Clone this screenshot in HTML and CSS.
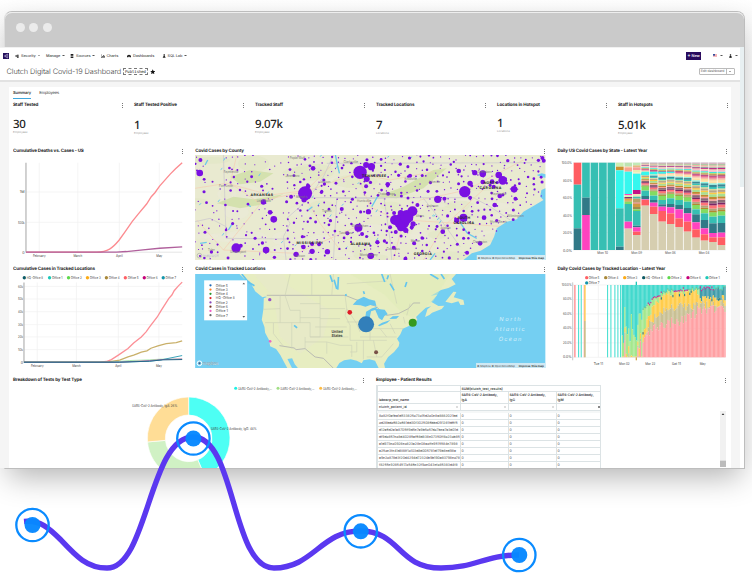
FILE: index.html
```html
<!DOCTYPE html>
<html lang="en">
<head>
<meta charset="utf-8">
<title>Clutch Digital Covid-19 Dashboard</title>
<link rel="stylesheet" href="styles.css">
</head>
<body>
<div class="window">
  <div class="titlebar"><i></i><i></i><i></i></div>
  <div class="screen">
    <header>
      <nav>
        <svg class="logo" viewBox="0 0 18 18"><rect width="18" height="18" fill="#24105c"/><path d="M14 3L9 6 4 9l5 3 5 3M9 6v6M14 3v12" fill="none" stroke="#d9d2ee" stroke-width="1.600"/></svg>
        <a class="n1"><svg viewBox="0 0 12 12"><path d="M0 6l5-4v8zM6 2h5v3H6zM6 7h5v4H6z"/></svg>Security<b></b></a>
        <a class="n2">Manage<b></b></a>
        <a class="n3"><svg viewBox="0 0 12 12"><path d="M2 0h8v3H2zM2 4h8v3H2zM2 8h8v4H2z"/></svg>Sources<b></b></a>
        <a class="n4"><svg viewBox="0 0 12 12"><path d="M0 1h1v9h11v1H0zM3 6h2v3H3zM6 3h2v6H6zM9 5h2v4H9z"/></svg>Charts</a>
        <a class="n5"><svg viewBox="0 0 12 12"><path d="M0 10V7a6 5 0 0 1 12 0v3H8L6 7l-2 3z"/></svg>Dashboards</a>
        <a class="n6"><svg viewBox="0 0 12 12"><path d="M5 0h3v5l3 6H2l3-6z"/></svg>SQL Lab<b></b></a>
        <span class="new"><em>+</em> New</span>
        <svg class="flag" viewBox="0 0 12 9"><rect width="12" height="9" fill="#fff"/><path d="M0 1h12M0 4h12M0 7h12" stroke="#e34b57" stroke-width="1.4"/><rect width="6" height="5" fill="#344f9d"/></svg><b class="caret"></b>
        <svg class="user" viewBox="0 0 10 12"><circle cx="5" cy="3" r="2.5"/><path d="M1 12V8q4-4 8 0v4z"/></svg><b class="caret last"></b>
      </nav>
      <div class="heading">
        <h1>Clutch Digital Covid-19 Dashboard</h1>
        <span class="published">Published</span>
        <svg class="star" viewBox="0 0 20 20"><path d="M10 1l2.8 6 6.5.8-4.8 4.4 1.3 6.6L10 15.600l-5.800 3.200 1.300-6.600L.7 7.800 7.200 7z"/></svg>
        <span class="edit"><u>Edit dashboard</u><s><b></b></s></span>
      </div>
    </header>
    <main>
      <div class="tabs"><span class="active">Summary</span><span>Employees</span></div>
      <section class="kpis">
        <article><h2>Staff Tested</h2><strong>30</strong><small>Employees</small></article>
        <article class="low"><h2>Staff Tested Positive</h2><strong>1</strong><small>Employees</small></article>
        <article><h2>Tracked Staff</h2><strong>9.07k</strong><small>Employees</small></article>
        <article class="low"><h2>Tracked Locations</h2><strong>7</strong><small>Locations</small></article>
        <article class="high"><h2>Locations in Hotspot</h2><strong>1</strong><small>Locations</small></article>
        <article class="low"><h2>Staff in Hotspots</h2><strong>5.01k</strong><small>Employees</small></article>
      </section>
      <section class="row first">
        <article><h2>Cumulative Deaths vs. Cases - US</h2><svg id="deaths" viewBox="39 45 513 315"></svg></article>
        <article><h2>Covid Cases by County</h2><svg id="county" viewBox="15 45 1051 315"></svg></article>
        <article><h2>Daily US Covid Cases by State - Latest Year</h2><svg id="states" viewBox="24 45 513 315"></svg></article>
      </section>
      <section class="row second">
        <article><h2>Cumulative Cases in Tracked Locations</h2><svg id="tracked" viewBox="39 41 513 283"></svg></article>
        <article><h2>Covid Cases in Tracked Locations</h2><svg id="america" viewBox="15 41 1051 283"></svg></article>
        <article><h2>Daily Covid Cases by Tracked Location - Latest Year</h2><svg id="daily" viewBox="24 41 513 283"></svg></article>
      </section>
      <section class="row third">
        <article><h2>Breakdown of Tests by Test Type</h2><svg id="donut" viewBox="39 42 1056 252"></svg></article>
        <article><h2>Employee - Patient Results</h2>
          <div class="results">
            <div class="table">
              <div class="tr sum"><span></span><span class="wide">SUM(clutch_test_results)</span></div>
              <div class="tr head"><span>labcorp_test_name</span><span>SARS-CoV-2 Antibody,<br>IgA</span><span>SARS-CoV-2 Antibody,<br>IgG</span><span>SARS-CoV-2 Antibody,<br>IgM</span></div>
              <div class="tr sort"><span>clutch_patient_id<q></q></span><span><q></q></span><span><q></q></span><span><q class="on"></q></span></div>
              <div class="spacer"></div>
              <div class="tr"><span>8a82f0efbe1d533825a73a15d2a0c8e8882021bd</span><span>0</span><span>0</span><span>0</span></div>
              <div class="tr"><span>ad28bda682a681dd30f3025086bbd291281fd6f5</span><span>0</span><span>0</span><span>0</span></div>
              <div class="tr"><span>d12e6d2e1e8705ff9d5c7e9b5a57da7bce7e3d01d</span><span>0</span><span>0</span><span>0</span></div>
              <div class="tr"><span>df9da857ca8d40285ef68d838c07350ff8a23ab85</span><span>0</span><span>0</span><span>0</span></div>
              <div class="tr"><span>e1d973ca0928ca823e28c08eaffc9515584c7898</span><span>0</span><span>0</span><span>0</span></div>
              <div class="tr"><span>e25ac3fc41d888f1a103d8d005781df79b8cd98e</span><span>0</span><span>0</span><span>0</span></div>
              <div class="tr"><span>e9c2a878d3f20d4294d72324b9b190e83798ca78</span><span>0</span><span>0</span><span>0</span></div>
              <div class="tr"><span>f8255c92854517a546c32f9ac043cfa85383d4f8</span><span>0</span><span>0</span><span>0</span></div>
            </div>
            <svg class="scroll" viewBox="0 0 18 168"><rect width="18" height="168" fill="#f1f1f1"/><path d="M5 12h8L9 7z" fill="#333"/><rect y="149" width="18" height="19" fill="#bcbcbc"/></svg>
          </div>
        </article>
      </section>
    </main>
  </div>
</div>
<svg class="wave" viewBox="0 0 752 573">
  <path d="M24 521.500C40 520 48 527 61 540C76 556 87 568 107 568C148 568 149 437 193 437C236 437 231 568 274 568C313 568 321 531 360 531C401 531 397 568 441 568C476 568 484 555 519 555"/>
  <g><circle cx="32.500" cy="525" r="16.200"/><circle cx="193.400" cy="438.500" r="16.200"/><circle cx="360.800" cy="531.300" r="16.200"/><circle cx="519.300" cy="555" r="16.200"/></g>
  <g class="core"><circle cx="32.500" cy="525" r="8"/><circle cx="193.400" cy="438.500" r="8"/><circle cx="360.800" cy="531.300" r="8"/><circle cx="519.300" cy="555" r="8"/></g>
</svg>
<script src="charts.js"></script>
</body>
</html>
```
FILE: styles.css
```css
* { box-sizing: border-box; }
body { margin: 0; width: 752px; height: 573px; overflow: hidden; position: relative; background: linear-gradient(#fff, #fcfcfc 12px, #fff 60px); font-family: Inter, "Liberation Sans", sans-serif; color: #333; text-rendering: geometricPrecision; }
.window { margin: 11px 0 0 4px; width: 741px; height: 457.500px; background: #fff; border: 1px solid #bdbdbd; border-left-color: #ddd; border-radius: 8px 8px 0 0; box-shadow: 0 12px 30px -4px rgba(0,0,0,.3); }
.titlebar { height: 35px; background: #cacaca; border-radius: 7px 7px 0 0; border-top: 1px solid #eee; display: flex; align-items: center; padding: 0 0 6px 10.500px; gap: 4.800px; }
.titlebar i { width: 9px; height: 9px; border-radius: 50%; background: #ebebeb; }
.screen { margin-left: -5px; width: 744px; height: 421px; background: linear-gradient(#e8f0f2 140px, #fff 140px) right / 4px 100% no-repeat, #f5f5f5; padding-right: 4px; overflow: hidden; }
header { background: #fff; height: 35px; border-bottom: 2px solid #e2e2e2; border-top: 1px solid #f1f1f1; }
nav { height: 15px; display: flex; align-items: center; padding-left: 3px; font-size: 3.850px; font-weight: 500; letter-spacing: -.1px; color: #444; }
nav a { display: flex; align-items: center; white-space: nowrap; }
nav a svg { width: 4px; height: 4px; margin-right: 2px; fill: #222; }
.logo { width: 6px; height: 6px; margin-right: 6px; }
nav b, .edit b { border: 1px solid transparent; border-top: 1.300px solid #555; border-bottom: 0; width: 2.400px; margin-left: 2px; }
.n1 { width: 31px; } .n2 { width: 24px; } .n3 { width: 30.500px; } .n4 { width: 26.500px; } .n5 { width: 34.500px; } .n6 { width: 30px; }
.new { background: #2a0c5e; color: #fff; width: 15.500px; height: 8px; margin-left: auto; display: flex; align-items: center; justify-content: center; gap: 1px; font-weight: 600; }
.new em { font-style: normal; font-size: 5px; }
.flag { width: 4px; height: 3px; margin-left: 12px; }
.user { width: 3px; height: 4px; margin-left: 6.500px; }
nav .caret { margin-left: 3px; } nav .caret.last { margin-right: 2.500px; margin-left: 3px; }
.heading { display: flex; align-items: center; height: 17px; padding: 0 5.500px 0 6.500px; }
h1 { margin: 0; font-weight: 300; font-size: 7.400px; letter-spacing: -.09px; color: #444; width: 116.500px; white-space: nowrap; }
.published { border: 1px dashed #777; width: 25px; height: 7.500px; font: 3.950px "DejaVu Sans Mono", monospace; line-height: 5.500px; text-align: center; color: #222; letter-spacing: -.05px; white-space: nowrap; }
.star { width: 5.500px; height: 5.500px; margin-left: 1.500px; fill: #111; }
.edit { margin-left: auto; width: 36px; height: 7.500px; border: 1px solid #bbb; border-radius: 1px; display: flex; font-size: 3.500px; line-height: 5.500px; letter-spacing: -.1px; color: #666; }
.edit u { text-decoration: none; width: 27px; text-align: center; border-right: 1px solid #bbb; white-space: nowrap; }
.edit s { flex: 1; display: flex; align-items: center; }
main { margin: 5px 9px 0; background: #fff; height: 382px; padding: 1px 3px 0 4px; }
.tabs { display: flex; gap: 8px; font-size: 4.100px; letter-spacing: -.12px; line-height: 9px; height: 12px; }
.tabs .active { font-weight: 600; border-bottom: 1.200px solid #3fa7dc; height: 11px; }
h2 { margin: 0; font-size: 4.500px; height: 6px; line-height: 7.500px; font-weight: 700; letter-spacing: -.12px; color: #222; white-space: nowrap; }
article { min-width: 0; background: repeating-linear-gradient(#777 0 1px, #fff 1px 2px) right 1px top 1px / 1px 5px no-repeat; }
.kpis { display: grid; grid-template-columns: repeat(6, 110.500px); gap: 10.500px; height: 46px; margin-top: 2px; }
.kpis strong { display: block; font: 500 11.500px/14px "Noto Sans", sans-serif; letter-spacing: -.35px; margin-top: 10px; height: 12px; color: #222; }
.kpis .low strong { margin-top: 11px; } .kpis .high strong { margin-top: 9px; }
.kpis small { display: block; font-size: 2.800px; line-height: 4px; color: #999; margin-top: 0; }
.row { display: grid; grid-template-columns: 170.500px 350.500px 171px; column-gap: 11.700px; width: 715.400px; }
.row svg { display: block; width: 100%; }
.first article, .second article { overflow: hidden; }
.first { height: 118px; } .first h2 { height: 7px; } .first article > svg { height: 105px; }
.second { height: 111px; } .second h2 { height: 7.500px; } .second article > svg { height: 94.300px; }
.third { grid-template-columns: 352px 351px; column-gap: 11px; }
.third h2 { height: 7px; } .third article > svg { height: 84px; }
.results { display: flex; justify-content: space-between; padding-top: 1px; }
.table { width: 225px; font-size: 3.450px; color: #444; }
.tr { display: grid; grid-template-columns: 82.500px 48px 48px 46px; height: 7px; border: .6px solid #dce3e5; border-top: 0; line-height: 6px; letter-spacing: -.02px; }
.tr span { border-left: 1px solid #dce3e5; padding-left: 1px; white-space: nowrap; }
.tr .wide { grid-column: 2 / 5; font-weight: 600; }
.sum { border-top: 1px solid #dce3e5; }
.head { height: 11.500px; line-height: 4.500px; font-weight: 600; letter-spacing: -.1px; }
.head span { padding-top: 1px; } .head span:first-child { padding-top: 6px; }
.sort { height: 7px; font-weight: 500; }
.sort q { float: right; width: 2px; height: 2px; margin: 2px 1.500px; border: 1px solid #ddd; } .sort q::before, .sort q::after { content: none; }
.sort q.on { border-color: #888; }
.spacer { height: 2.500px; background: #f5f7f7; border-left: 1px solid #dce3e5; border-right: 1px solid #dce3e5; }
.results .scroll { width: 6px; height: 56px; margin: 26px 1px 0 0; }
.wave { position: absolute; left: 0; top: 0; width: 752px; height: 573px; fill: none; stroke: #5b38f0; stroke-width: 5.400; }
.wave g { stroke: #0a8bff; stroke-width: 2.300; } .wave .core { stroke: none; fill: #0788ff; opacity: .97; }
```
FILE: charts.js
```js
var seed = 11;
function rnd() { seed = (seed * 16807) % 2147483647; return seed / 2147483647; }
function put(id, s) { document.getElementById(id).innerHTML = s; }
function rect(x, y, w, h, f, o) { return '<rect x="' + x + '" y="' + y + '" width="' + w + '" height="' + h + '" fill="' + f + '"' + (o ? ' opacity="' + o + '"' : '') + '/>'; }
function dot(x, y, r, f) { return '<circle cx="' + x + '" cy="' + y + '" r="' + r + '" fill="' + f + '"/>'; }
function line(d, c, w) { return '<path d="' + d + '" fill="none" stroke="' + c + '" stroke-width="' + (w || 2) + '"/>'; }
function text(x, y, s, len, extra) { return '<text x="' + x + '" y="' + y + '" font-size="11" fill="#444" ' + (len ? 'textLength="' + len + '" lengthAdjust="spacingAndGlyphs" ' : '') + (extra || '') + '>' + s + '</text>'; }
var END = 'text-anchor="end"', MID = 'text-anchor="middle"';

/* cumulative deaths */
var s = '';
[118, 234, 359, 479].forEach(function (x) { s += line('M' + x + ' 68V337', '#f0f0f0'); });
[156, 247].forEach(function (y) { s += line('M78 ' + y + 'H548', '#f0f0f0'); });
s += line('M78 68V338', '#bbb', 4) + line('M78 337H548', '#ccc', 1.5);
s += line('M78 337H290C325 336 338 325 358 301L375 277L398 244L415 223L441 192L455 170L466 158L480 138L498 118L512 102L528 86L548 68', '#fc8b90', 4);
s += line('M78 337H350L380 335L430 330L480 325L548 321', '#b0609c', 4);
s += text(74, 160, '1M', 0, END) + text(74, 251, '500k', 20, END) + text(74, 341, '0', 0, END);
s += text(118, 350, 'February', 38, MID) + text(234, 350, 'March', 26, MID) + text(359, 350, 'April', 20, MID) + text(479, 350, 'May', 18, MID);
put('deaths', s);

/* tracked locations, cumulative */
s = '';
var legend = [['HQ -Office 8', 73, '#0d5a66', 49], ['Office 1', 149, '#1cc8ba', 32], ['Office 2', 206, '#5fd94d', 33], ['Office 3', 263, '#fcab16', 33], ['Office 4', 320, '#a8883a', 33], ['Office 5', 377, '#ff5f66', 33], ['Office 6', 434, '#c4007a', 33], ['Office 7', 491, '#1395ab', 32]];
legend.forEach(function (l) { s += dot(l[1], 52, 5, l[2]) + text(l[1] + 7, 56, l[0], l[3]); });
[112, 230, 356, 478].forEach(function (x) { s += line('M' + x + ' 66V306', '#f0f0f0'); });
[78, 116, 154, 193, 230, 268].forEach(function (y, i) { s += line('M72 ' + y + 'H548', '#f0f0f0') + text(69, y + 4, (60 - i * 10) + 'k', 15, END); });
s += text(69, 310, '0', 0, END) + line('M72 66V307', '#bbb', 4);
s += line('M72 306H300L320 304L335 298L357 284L385 265L402 248L425 230L440 214L450 200L473 170L485 150L508 114L517 104L524 91L536 77L548 65', '#fc9097', 4);
s += line('M72 306H320L360 300L385 290L402 285L412 281L425 276L442 272L454 264L475 257L500 250L530 247L548 242', '#c9b06a', 4);
s += line('M72 306H330L390 301L450 299L480 297L548 297', '#83dc8a');
s += line('M72 306H360L450 303L485 299L548 286', '#3ba5bb', 3) + line('M72 306H360L450 301L490 298L548 296', '#b64a94') + line('M72 306H360L450 303L490 299L548 298', '#26688b', 3);
s += text(112, 319, 'February', 38, MID) + text(230, 319, 'March', 26, MID) + text(356, 319, 'April', 19, MID) + text(478, 319, 'May', 18, MID);
put('tracked', s);

/* county bubbles */
s = rect(15, 45, 1051, 315, '#e9ead0');
for (var i = 0; i < 60; i++) { s += '<ellipse cx="' + (15 + rnd() * 900) + '" cy="' + (45 + rnd() * 310) + '" rx="' + (20 + rnd() * 50) + '" ry="' + (8 + rnd() * 20) + '" fill="' + (i % 3 ? '#eceada' : '#dfe6c2') + '" opacity=".5"/>'; }
s += '<path d="M80 190l50-20 60 8 90-15-60 30-70 12zM120 110l60-20 70 10-40 25-60 8zM560 170l80-30 90-50 40-5-70 60-80 30z" fill="#d4e1ae"/>';
s += line('M15 145L110 130 240 165 360 150 500 100 600 120 730 95M100 330L220 180 345 155 440 60M340 160L390 250 450 330M610 360L640 240 690 180 830 150 1000 60M700 360L760 260 900 130M650 240L800 250 940 260M500 100L540 200 640 250M20 240L100 330 320 340 500 260M140 45L120 130 210 190', '#f5cdb2', 2);
s += line('M100 45L108 295 288 297M15 245L60 235 108 260M288 360L280 290 300 250 290 235 330 200 370 155 400 110 430 45M440 175L430 360M345 173H850L900 200 960 240M410 70L1060 68M440 175H582L600 300 605 360M700 175L760 250 810 320', '#c9c4cf', 2);
s += line('M436 45l6 30 6 25M45 75l8-15M115 270l12-20M355 210l12-10M545 200l20-35M812 250l20 30 28 15M720 360l15-20M30 310l20-3M170 190l12 10', '#6cc9eb', 4);
for (i = 0; i < 26; i++) { var lx = 15 + rnd() * 740, ly = 50 + rnd() * 290; s += line('M' + lx + ' ' + ly + 'l5-' + (3 + rnd() * 6), '#6cc9eb', 3); }
s += '<path d="M820 360L845 340 872 332 900 315 912 290 920 265 950 245 980 238 1000 215 1035 195 1060 180 1050 170 1054 150 1066 145V360z" fill="#73cff1"/><path d="M1040 105l15-5 11 3v10l-14-2z" fill="#73cff1"/>';
function ocean(x, y) { return x > 820 && (y > 350 - (x - 820) * .74); }
for (var gx = 22; gx < 1060; gx += 21) for (var gy = 52; gy < 358; gy += 20) {
  var px = gx + rnd() * 16 - 8, py = gy + rnd() * 16 - 8;
  if (ocean(px, py) || (px < 280 && rnd() < .48)) continue;
  s += dot(px.toFixed(1), py.toFixed(1), (1.8 + Math.pow(rnd(), 3) * 3).toFixed(1), '#7612df');
}
var big = '31,60,6 29,99,10 118,84,4 369,85,7 345,160,21 354,139,7 342,179,8 303,170,6 220,186,8 240,217,7 251,238,10 138,324,14 152,317,6 228,330,10 217,309,5 64,336,5 340,321,7 318,343,8 366,334,8 412,335,8 387,313,6 510,97,20 528,75,9 544,80,11 530,117,9 455,207,6 535,215,8 505,263,12 472,280,6 516,282,6 541,348,9 528,139,6 421,242,5 253,352,5 337,290,5 108,270,4 366,312,6 562,307,6 403,132,5 394,157,5 593,133,7 594,161,6 660,107,6 743,178,11 763,176,6 806,93,7 854,98,8 878,101,10 926,105,10 938,121,13 824,155,17 840,130,8 840,173,6 972,148,10 929,168,7 914,195,7 976,176,6 906,125,7 911,140,6 878,126,7 820,233,12 800,241,8 882,233,7 758,275,7 870,310,7 831,338,6 635,244,24 667,214,15 650,230,20 615,240,15 633,262,12 632,219,9 682,195,6 600,262,6 647,271,8 665,262,6 612,219,6 672,310,6 611,323,6 646,356,6 562,307,6 696,294,5 583,303,5 669,252,8 617,276,6 543,347,9 920,242,5 1057,54,6 1061,62,6 1045,61,5 953,62,5';
big.split(' ').forEach(function (b) { b = b.split(','); s += dot(b[0], b[1], b[2], '#7a10e2'); });
[['Poplar Bluff', 322, 56, 46], ['Clarksville', 482, 68, 44], ['Fayetteville', 123, 98, 44], ['Jonesboro', 307, 112, 42], ['Fort Smith', 108, 142, 42], ['Jackson', 405, 128, 32], ['Little Rock', 221, 185, 42], ['Huntsville', 522, 185, 42], ['Tupelo', 410, 215, 28], ['Memphis', 335, 174, 34], ['Birmingham', 510, 262, 50], ['Tuscaloosa', 468, 281, 42], ['Tyler', 64, 333, 20], ['Shreveport', 144, 339, 48], ['Montgomery', 536, 348, 54], ['Jackson', 330, 352, 30], ['Knoxville', 662, 121, 38], ['Asheville', 733, 130, 34], ['Chattanooga', 589, 164, 50], ['Greensboro', 884, 98, 42], ['Fayetteville', 927, 164, 44], ['Anderson', 727, 200, 36], ['Augusta', 766, 266, 30], ['Wilmington', 976, 232, 50], ['Myrtle Beach', 925, 250, 50], ['Charleston', 870, 308, 42], ['Macon', 676, 305, 28], ['Columbus', 609, 331, 40], ['Athens', 690, 232, 24]].forEach(function (l) { s += text(l[1], l[2], l[0], l[3], MID + ' style="fill:#777"'); });
[['ARKANSAS', 215, 168, 68], ['TENNESSEE', 552, 111, 72], ['NORTH', 901, 132, 40], ['CAROLINA', 901, 146, 66], ['SOUTH', 821, 237, 38], ['CAROLINA', 821, 252, 62], ['MISSISSIPPI', 358, 312, 78], ['ALABAMA', 511, 314, 60], ['GEORGIA', 698, 345, 54]].forEach(function (l) { s += '<text x="' + l[1] + '" y="' + l[2] + '" text-anchor="middle" textLength="' + l[3] + '" font-size="10.5" font-weight="700" fill="#222">' + l[0] + '</text>'; });
s += rect(860, 345, 206, 15, '#e0eef4', .9) + text(863, 356, '© Mapbox © OpenStreetMap', 112, 'style="font-size:8.300px"') + text(986, 356, 'Improve this map', 76, 'style="font-size:8.600px;font-weight:600;fill:#222"');
s += '<circle cx="28" cy="347" r="7" fill="none" stroke="#aaa" stroke-width="2"/>' + text(38, 351, 'mapbox', 48, 'style="font-size:13px;fill:#fff;stroke:#bbb;stroke-width:.7"');
put('county', s);

/* stacked share per state */
s = '';
['100.0%', '80.0%', '60.0%', '40.0%', '20.0%', '0.0%'].forEach(function (t, k) { s += text(69, 73 + k * 52.4, t, k ? 27 : 31, END) + line('M72 ' + (68 + k * 52.4) + 'H530', '#eee'); });
var T = '#36bfb3', D = '#317987', M = '#ff43bf', R = '#ff5d62', C = '#36f7ee', B = '#d6ceb0';
var stripes = ['#b4892e', '#b5a478', '#ff7378', '#7c2565', '#8b6a75', '#ffa097', '#c0892f', '#a8df91', '#fcc944', '#b9a58a', '#d8d998', '#36c4b8', '#3d8894', '#8ff4e3', '#ffe0a8', '#fbe0a0', '#f7bca6', '#e76f8f', '#a62a76', '#c7a060', '#b9dd66', '#3fe5da', '#f8b5c8', '#eee2a5', '#c22a86', '#6b8194', '#d8d5a6', '#f7a9a4', '#8bd992', '#9fae8e', '#e9a4bd', '#b898ae'];
function fill(x, y0, y1) {
  var w = stripes.map(function (c, k) { return (3.2 - 2.5 * k / 32) * (.7 + ((k * 7) % 5) / 6); });
  var sum = w.reduce(function (a, b) { return a + b; }), y = y1, o = '';
  w.forEach(function (v, k) { var h = v / sum * (y1 - y0); y -= h; o += rect(x, y, 23, h + .2, stripes[k]); });
  return o;
}
var first = [[[68, R], [134, T], [265, D]], [[68, T], [173, D], [225, M]], [[68, T]], [[68, T]], [[68, T]], [[68, '#cbeeb1'], [80, '#cb9130'], [91, C], [205, T], [320, D]], [[68, '#bce4b2'], [80, '#ffc0a0'], [84, '#f8a490'], [95, C], [162, M], [166, '#d7f6b0'], [171, '#81386d'], [176, '#e9a445'], [181, '#cb963e'], [185, '#83db65'], [192, T], [245, M], [266, B]], [[68, '#c1eab8'], [76, '#e2bb82'], [82, '#f79c9c'], [90, '#e8edb4'], [97, '#f5e9b2'], [101, C], [150, '#c41385'], [162, '#efe6b6'], [170, '#43c0ad'], [176, '#baa16a'], [188, '#ef6c75'], [191, '#cf9a42'], [201, '#9f8c4f'], [208, '#76d65a'], [213, T], [257, D], [262, M], [275, R], [285, B]]];
first.forEach(function (col, k) { var x = 74 + k * 25.4; col.forEach(function (g, n) { var e = col[n + 1] ? col[n + 1][0] : 330; s += rect(x, g[0], 23, e - g[0], g[1]); }); });
[[152, 168, 178, 180, 197], [167, 180, 188, 200, 222], [180, 193, 200, 213, 245], [175, 192, 202, 220, 252], [180, 195, 208, 235, 261], [185, 204, 220, 245, 275], [208, 223, 247, 268, 293], [220, 240, 265, 283, 302], [230, 250, 279, 292, 306], [227, 249, 278, 292, 315]].forEach(function (v, k) {
  var x = 74 + (k + 8) * 25.4; s += fill(x, 68, v[0] - 12) + rect(x, v[0] - 13, 23, 13, '#83dc62');
  if (k < 4) s += rect(x, 95, 23, 10 - k * 2, C);
  [T, D, M, R, B].forEach(function (c, n) { s += rect(x, v[n], 23, (n < 4 ? v[n + 1] : 330) - v[n], c); });
});
s += text(161, 343, 'Mon 10', 32, MID) + text(263, 343, 'Mon 09', 32, MID) + text(364, 343, 'Mon 06', 32, MID) + text(465, 343, 'Mon 04', 32, MID);
put('states', s);

/* daily share per location */
s = '';
[['Office 5', 113, '#ff5f66'], ['Office 4', 170, '#a8883a'], ['Office 3', 227, '#fcab16'], ['HQ -Office 8', 284, '#0d5a66'], ['Office 2', 360, '#5fd94d'], ['Office 6', 417, '#c4007a'], ['Office 1', 474, '#1cc8ba']].forEach(function (l) { s += dot(l[1], 52, 5, l[2]) + text(l[1] + 6, 56, l[0], l[0].length > 8 ? 51 : 32); });
s += dot(113, 68, 5, '#1395ab') + text(119, 72, 'Office 7', 32);
['100.0%', '80.0%', '60.0%', '40.0%', '20.0%', '0.0%'].forEach(function (t, k) { s += text(68, 77 + k * 43.4, t, k ? 26 : 30, END) + line('M72 ' + (74 + k * 43.4) + 'H530', '#eee'); });
[148, 226, 304, 382, 461].forEach(function (x) { s += line('M' + x + ' 74V291', '#eee'); });
s += line('M71 66V300', '#aaa', 2) + rect(75, 74, 5, 217, '#ffa1a4');
[87, 95, 174, 184, 196, 205, 213].forEach(function (x) { s += rect(x, 74, 3.3, 217, '#4de0d3'); });
s += rect(105, 74, 5, 108, '#ffd15b') + rect(105, 182, 5, 109, '#c6c083') + rect(104, 74, 1.5, 217, '#ffa1a4');
function at(x, p) { for (var k = 1; k < p.length; k++) if (x <= p[k][0]) { var a = p[k - 1], b = p[k]; return a[1] + (b[1] - a[1]) * (x - a[0]) / (b[0] - a[0]); } return p[p.length - 1][1]; }
for (var x = 218; x < 529; x += 3.9) {
  var early = x < 278, j = rnd() - .5;
  var gT = early ? 140 + rnd() * 110 : at(x, [[276, 155], [320, 108], [350, 92], [450, 86], [530, 84]]) + j * 12;
  var yT = early ? gT + 50 + rnd() * 90 : at(x, [[276, 230], [290, 190], [312, 135], [350, 100], [440, 88], [455, 115], [530, 112]]) + (rnd() - .5) * 18;
  var tT = early ? yT + 10 + rnd() * 30 : at(x, [[276, 250], [300, 185], [350, 143], [440, 135], [530, 125]]) + (rnd() - .5) * 26;
  var pT = early ? tT + 3 + rnd() * 20 : at(x, [[276, 265], [290, 215], [330, 192], [400, 184], [450, 150], [530, 140]]) + (rnd() - .5) * 34;
  gT = Math.max(78, gT); yT = Math.min(289, Math.max(yT, gT + 3)); tT = Math.min(290, Math.max(tT, yT + 3)); pT = Math.min(291, Math.max(pT, tT + 2));
  s += rect(x, 74, 4.1, gT - 74, '#43d9cd') + rect(x, gT, 4.1, yT - gT, x > 450 ? '#409caa' : '#a4e88d') + rect(x, yT, 4.1, tT - yT, '#ffcd4c') + rect(x, tT, 4.1, pT - tT, '#c9c094') + rect(x, pT, 4.1, 291 - pT, '#ffa1a4');
  if (!early) s += rect(x, gT - 2, 4.1, 4, x % 2 > .9 ? '#d22893' : '#68c39d');
  if (rnd() < .15) s += rect(x, yT, 4, 7, '#2b7f93');
}
s += rect(260, 64, 4, 10, '#1ec8ba') + rect(260, 291, 4, 9, '#d4a64b');
s += text(148, 314, 'Tue 11', 28, MID) + text(226, 314, 'Mon 02', 32, MID) + text(304, 314, 'Mar 22', 30, MID) + text(382, 314, 'Sat 11', 28, MID) + text(461, 314, 'May', 18, MID);
put('daily', s);

/* north america */
s = rect(15, 41, 1051, 283, '#74cff2');
s += '<path d="M148 41L162 55 178 63 190 82 215 102 230 110 221 114 220 145 215 178 223 200 225 217 237 240 240 258 258 266 271 285 282 306 292 324H438L448 308 462 300 482 297 500 301 515 309 520 300 538 297 555 301 566 324H585L582 310 594 290 612 275 626 258 628 247 621 235 631 222 638 205 655 198 668 190 682 179 678 170 690 158 707 142 723 138 712 147 705 170 718 164 726 157 755 146 763 136 745 137 723 124 742 103 722 106 753 89 775 83 797 72 785 56 798 41Z" fill="#e7edc1"/>';
s += '<path d="M766 124l24-30 9 1-8 16 29 8 3 14-12 1-6-11-20 6zM183 68l20 22 26 18-12 3-22-18z" fill="#e7edc1"/>';
s += '<path d="M292 296l14 28h18l-10-12-8-18z" fill="#74cff2"/>';
s += '<path d="M280 41L300 80 420 150 400 230 330 280 270 230 250 110 190 41z" fill="#e9e6cf" opacity=".4"/><path d="M480 41l100 60 60 60 30 10 60-50 50-80z" fill="#dfebb8" opacity=".5"/>';
s += line('M230 105H465L495 117 555 137 590 165 625 160 655 145 670 128 690 128M268 256L312 263 318 268 345 265 375 290 400 294 430 324', '#a9a9ad', 2.2);
s += line('M220 147L270 145M225 187H360M250 188V220L280 258M305 187V265M270 105V187M285 106L300 150 330 150V187M330 130H390M390 106V172M330 172H390V230H360V187M345 230V265M390 145H465M390 175H450M375 200H470M360 230H475M345 245H410V280M465 107L470 145 465 165 480 195 480 240M410 245L450 255H485V290M470 185H505M470 145L500 190 510 215M540 200V240M505 205H640M510 230H620M480 240H590M520 240V297M550 240L560 290M500 245V275H480M300 41L285 105M365 41V105M430 41L425 105M470 70L590 62M600 41L620 130M570 205L590 230M600 190L615 220M660 130L650 165M640 170L645 190M530 290H575L610 250', '#cbd0b7', 1.8);
s += '<path d="M488 133l13-14 20-10 16 8 18 4 4 16-18-3-15 5-15-4zM528 154l18-10 17-5-6 9-14 5-5 23-6 11-8-4zM554 145l30 3 9 14-10 5-7 13-10-7zM564 195l12-8 25-8-10 9-24 10zM598 176l10-8 19-1-8 8z" fill="#67c6ee"/>';
s += line('M420 45l7 20M432 58l8 28M445 50l-2 38M467 101l1 6M520 93l3 8M312 195l9 8M575 41l9 24M595 45l-4 12M720 41l25 15M753 41l10 15M155 41l20 25 18 10M645 80l5-15M600 70l12 20', '#62c5ee', 5);
s += dot(239, 118, 5, '#9653c8') + dot(240, 243, 4, '#e66ac4') + dot(479, 156, 7, '#df1e27') + dot(528, 192, 24, '#327fba') + dot(668, 187, 12, '#35991f') + dot(558, 276, 6, '#785047');
s += text(441, 217, 'United', 34, MID + ' style="font-size:12px;font-weight:600;fill:#333"') + text(441, 231, 'States', 33, MID + ' style="font-size:12px;font-weight:600;fill:#333"');
[['North', 960, 183, 64], ['Atlantic', 959, 212, 91], ['Ocean', 960, 241, 68]].forEach(function (l) { s += '<text x="' + l[1] + '" y="' + l[2] + '" text-anchor="middle" textLength="' + l[3] + '" font-size="17" font-style="italic" fill="#d7f0fb">' + l[0] + '</text>'; });
s += rect(42, 60, 129, 120, '#fff');
['Office 5', 'Office 3', 'Office 4', 'HQ -Office 8', 'Office 2', 'Office 6', 'Office 1', 'Office 7'].forEach(function (l, k) { s += dot(61, 75 + k * 12.8, 3.4, ['#1f68b4', '#ff7e24', '#28952a', '#df2528', '#8a47ba', '#743328', '#f35dc5', '#666'][k]) + text(77, 79 + k * 12.8, l, k === 3 ? 57 : 36); });
s += '<path d="M157 72h8l-4-5zM157 167h8l-4 5z" fill="#555"/>';
s += '<circle cx="28" cy="309" r="7" fill="none" stroke="#fff" stroke-width="3"/><circle cx="28" cy="309" r="3" fill="#557"/>' + text(38, 314, 'mapbox', 47, 'style="font-size:14px;fill:#fff;stroke:#678;stroke-width:.5"');
s += rect(858, 308, 208, 15, '#d5eaf3', .95) + text(861, 319, '© Mapbox © OpenStreetMap', 114, 'style="font-size:8.300px"') + text(986, 319, 'Improve this map', 76, 'style="font-size:8.600px;font-weight:600;fill:#222"');
put('america', s);

/* test type donut */
function arc(a, b, c) { function p(r, t) { t = t * Math.PI / 180; return (566 + r * Math.sin(t)).toFixed(1) + ' ' + (205 - r * Math.cos(t)).toFixed(1); } return '<path d="M' + p(124, a) + 'A124 124 0 0 1 ' + p(124, b) + 'L' + p(70, b) + 'A70 70 0 0 0 ' + p(70, a) + 'Z" fill="' + c + '" stroke="#fff" stroke-width="2"/>'; }
s = arc(0, 157, '#4dfff4') + arc(157, 265, '#d0f1c4') + arc(265, 360, '#ffdd96');
s += text(396, 112, 'SARS-CoV-2 Antibody, IgA: 26%', 136) + text(632, 180, 'SARS-CoV-2 Antibody, IgG: 44%', 138);
[[707, '#1cf0e4'], [834, '#a2df86'], [962, '#fdbb44']].forEach(function (l) { s += dot(l[0], 55, 4.5, l[1]) + text(l[0] + 7, 59, 'SARS-CoV-2 Antibody,...', 102); });
put('donut', s);
```
